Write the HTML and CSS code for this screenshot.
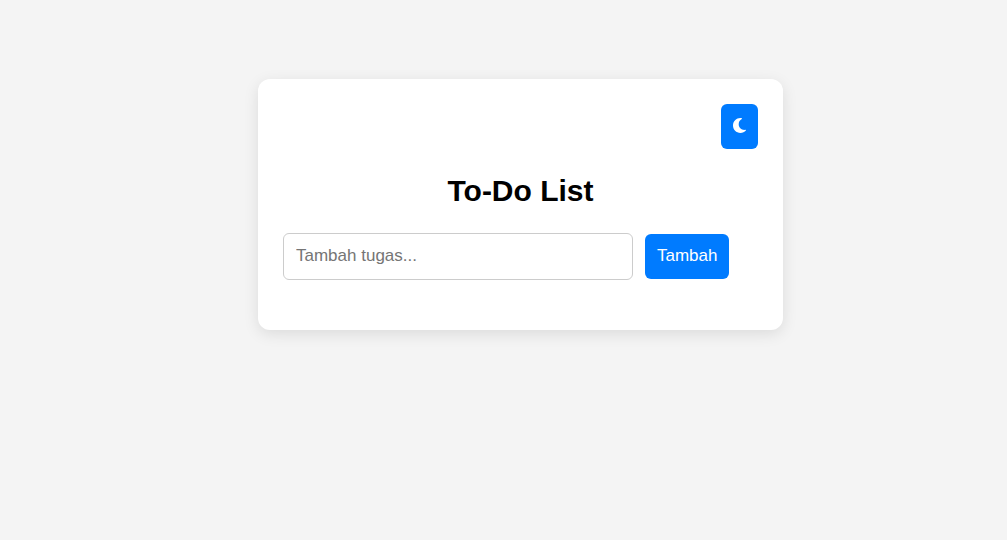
FILE: index.html
```html
<!DOCTYPE html>
<html lang="id">
<head>
  <meta charset="utf-8">
  <meta name="viewport" content="width=device-width, initial-scale=1">
  <title>To-Do List</title>
  <link rel="stylesheet" href="styles.css">
</head>
<body>
  <main class="card">
    <div class="toolbar">
      <button class="button" type="button" aria-label="Mode gelap">
        <svg class="moon" viewBox="0 0 13 15" aria-hidden="true"><path d="M7.4 0.1C3.3 0.1 0 3.4 0 7.5S3.3 14.9 7.4 14.9C9.6 14.9 11.5 14 12.9 12.5C13.1 12.1 12.8 11.7 12.4 11.8C8.8 12.4 5.7 9.8 5.7 6.2C5.7 3.9 6.9 2 8.8 1C9.2 0.7 9.1 0.2 8.7 0.2C8.3 0.1 7.8 0.1 7.4 0.1Z"/></svg>
      </button>
    </div>
    <h1 class="title">To-Do List</h1>
    <form class="task-form">
      <input class="task-input" type="text" placeholder="Tambah tugas..." aria-label="Tambah tugas">
      <button class="button" type="button">Tambah</button>
    </form>
  </main>
</body>
</html>
```

FILE: styles.css
```css
* {
  box-sizing: border-box;
}

body {
  margin: 0;
  padding: 79px 0 32px 34px;
  background: #f4f4f4;
  color: #000;
  font-family: Arial, "Liberation Sans", sans-serif;
}

.card {
  max-width: 525px;
  margin: 0 auto;
  padding: 25px 25px 50px;
  background: #fff;
  border-radius: 12px;
  box-shadow: 0 4px 15px rgba(0, 0, 0, 0.1);
}

.toolbar {
  display: flex;
  justify-content: flex-end;
}

.title {
  margin: 24px 0 25px;
  font-size: 30px;
  line-height: 35px;
  text-align: center;
}

.task-form {
  display: flex;
  align-items: center;
  gap: 12px;
}

.task-input {
  flex: 0 1 350px;
  min-width: 0;
  padding: 11px 12px 13px;
  border: 1px solid #ccc;
  border-radius: 6px;
  background: #fff;
  font: 17px/21px Arial, "Liberation Sans", sans-serif;
}

.task-input::placeholder {
  color: #757575;
}

.button {
  padding: 11px 12px 13px;
  border: 0;
  border-radius: 6px;
  background: #007bff;
  color: #fff;
  font: 17px/21px Arial, "Liberation Sans", sans-serif;
  cursor: pointer;
}

.moon {
  display: block;
  width: 13px;
  height: 15px;
  margin: 3px 0;
  fill: currentColor;
}
```
